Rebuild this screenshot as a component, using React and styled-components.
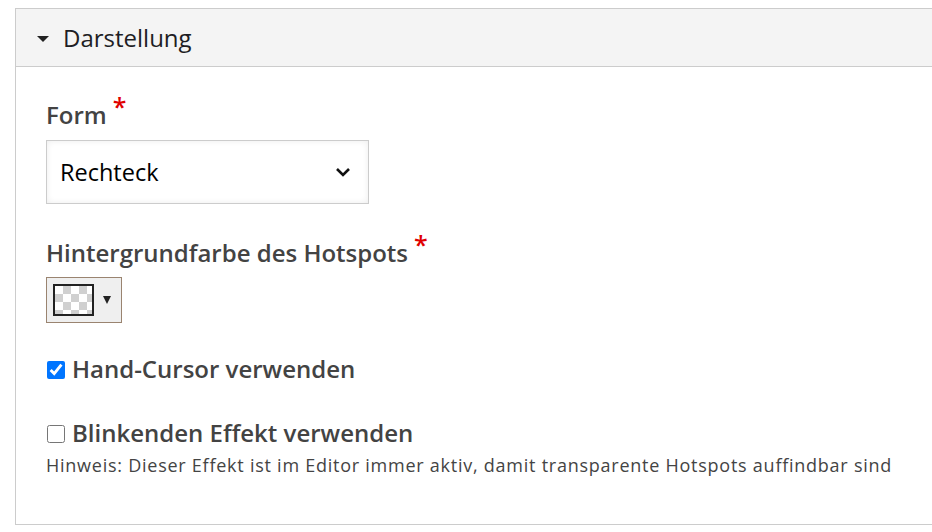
import React from 'react'
import styled, { createGlobalStyle } from 'styled-components'

const Global = createGlobalStyle`
    html, body {
        margin: 0;
        padding: 0;
        background: #fff;
        overflow: hidden;
    }
    body {
        font-family: "Open Sans", "DejaVu Sans", sans-serif;
    }
`;

const Page = styled.div`
    padding: 8px 0 0 15px;
`;

const Panel = styled.section`
    border: 1px solid #cccccc;
    border-right: none;
`;

const Header = styled.div`
    height: 57px;
    display: flex;
    align-items: center;
    gap: 14px;
    padding-left: 21px;
    background: #f4f4f4;
    border-bottom: 1px solid #cccccc;
    font-size: 24px;
    color: #1e1e24;
`;

const Caret = styled.span`
    width: 0;
    height: 0;
    border-left: 6px solid transparent;
    border-right: 6px solid transparent;
    border-top: 6px solid #222;
    margin-top: 2px;
`;

const Body = styled.div`
    padding: 31px 0 47px 30px;
    display: flex;
    flex-direction: column;
    align-items: flex-start;
`;

const Label = styled.div`
    font-size: 24px;
    line-height: 32px;
    font-weight: 600;
    color: #434343;
    margin-top: ${p => p.$top || 0}px;
`;

const Required = styled.span`
    color: #e00000;
    font-size: 25px;
    margin-left: 6px;
    position: relative;
    top: -8px;
`;

const Select = styled.div`
    margin-top: 9px;
    width: 323px;
    height: 64px;
    box-sizing: border-box;
    border: 1px solid #cccccc;
    box-shadow: inset 0 0 6px rgba(0, 0, 0, 0.08);
    display: flex;
    align-items: center;
    justify-content: space-between;
    padding: 0 16px 0 13px;
    font-size: 23.5px;
    color: #000;
`;

const ColorButton = styled.div`
    margin-top: 8px;
    width: 76px;
    height: 46px;
    box-sizing: border-box;
    border: 1px solid #9a8470;
    background: #efefef;
    display: flex;
    align-items: center;
    padding-left: 6px;
    gap: 9px;
`;

const Swatch = styled.div`
    width: 41px;
    height: 32px;
    box-sizing: border-box;
    border: 2px solid #222;
    background-color: #fff;
    background-image:
        linear-gradient(45deg, #d0d0d0 25%, transparent 25%, transparent 75%, #d0d0d0 75%),
        linear-gradient(45deg, #d0d0d0 25%, transparent 25%, transparent 75%, #d0d0d0 75%);
    background-size: 16px 16px;
    background-position: 0 0, 8px 8px;
`;

const SmallArrow = styled.span`
    width: 0;
    height: 0;
    border-left: 4.5px solid transparent;
    border-right: 4.5px solid transparent;
    border-top: 8px solid #222;
`;

const CheckRow = styled.label`
    display: flex;
    align-items: center;
    gap: 7px;
    font-size: 24px;
    line-height: 32px;
    font-weight: 600;
    color: #434343;
    margin-top: ${p => p.$top || 0}px;
`;

const Box = styled.input`
    width: 18px;
    height: 18px;
    margin: 2px 0 0 1px;
    accent-color: #0075ff;
`;

const Hint = styled.div`
    margin-top: 4px;
    font-size: 18px;
    line-height: 24px;
    letter-spacing: 0.75px;
    color: #444;
`;

const App = () => {
    return (
        <Page>
            <Global />
            <Panel>
                <Header>
                    <Caret />
                    <span>Darstellung</span>
                </Header>
                <Body>
                    <Label>Form<Required>*</Required></Label>
                    <Select>
                        <span>Rechteck</span>
                        <svg width="18" height="12" viewBox="0 0 18 12">
                            <path d="M3 3 L9 9 L15 3" fill="none" stroke="#111" strokeWidth="2.6" />
                        </svg>
                    </Select>
                    <Label $top={32}>Hintergrundfarbe des Hotspots<Required>*</Required></Label>
                    <ColorButton>
                        <Swatch />
                        <SmallArrow />
                    </ColorButton>
                    <CheckRow $top={30}>
                        <Box type="checkbox" defaultChecked />
                        Hand-Cursor verwenden
                    </CheckRow>
                    <CheckRow $top={32}>
                        <Box type="checkbox" />
                        Blinkenden Effekt verwenden
                    </CheckRow>
                    <Hint>Hinweis: Dieser Effekt ist im Editor immer aktiv, damit transparente Hotspots auffindbar sind</Hint>
                </Body>
            </Panel>
        </Page>
    );
}

export default App;
